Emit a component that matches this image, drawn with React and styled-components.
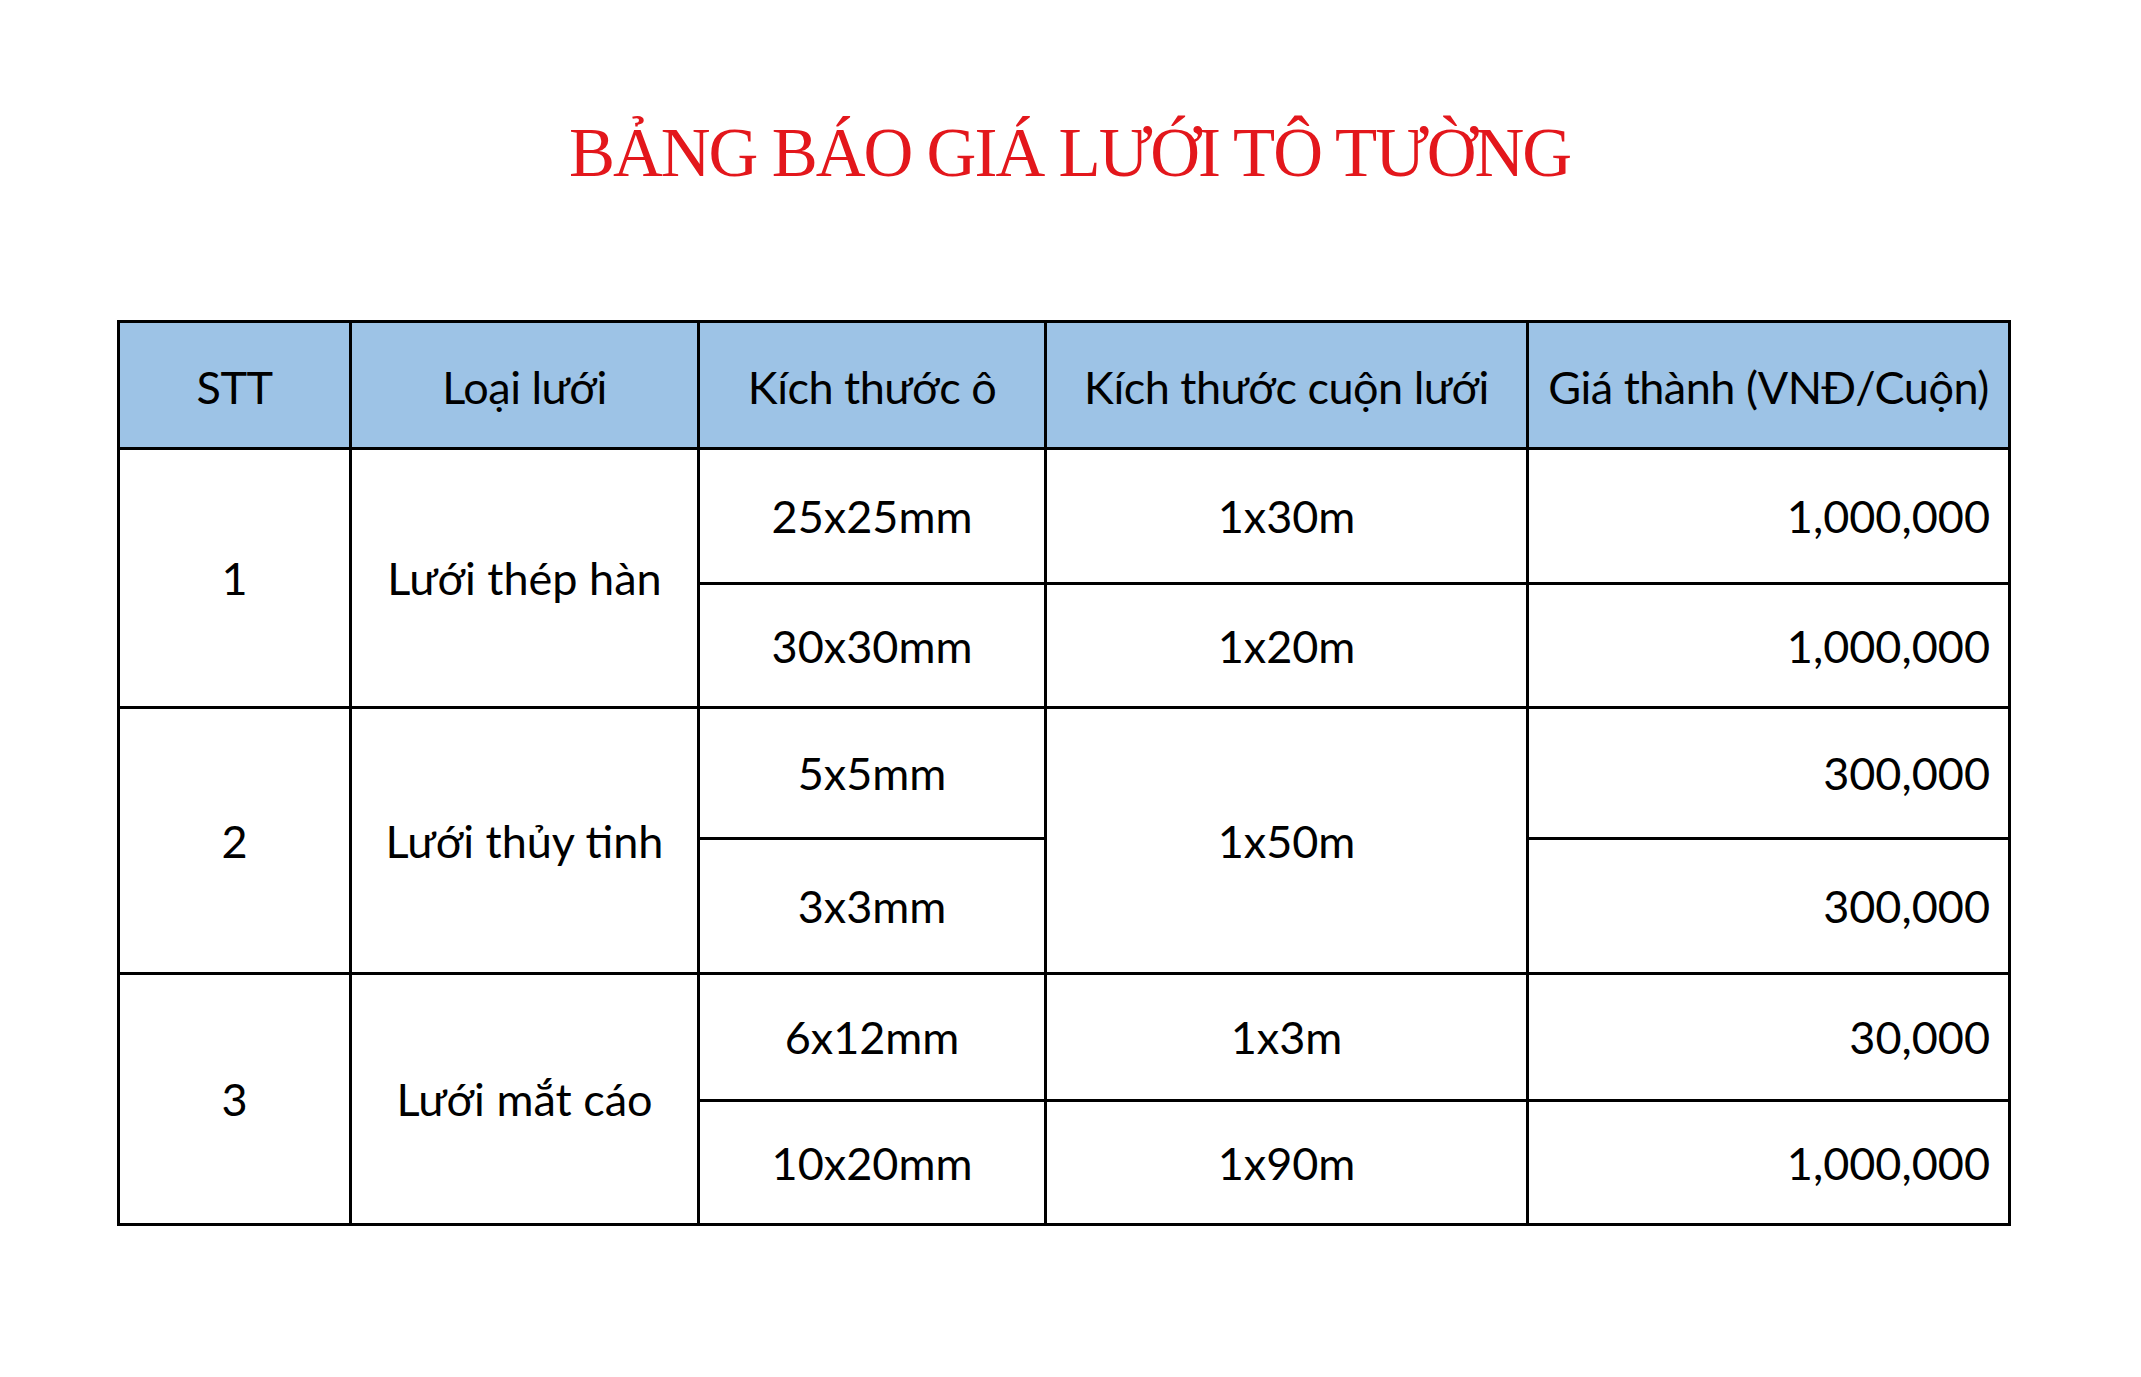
import React from "react";
import styled, { createGlobalStyle } from "styled-components";

const GlobalStyle = createGlobalStyle`
  html, body {
    margin: 0;
    padding: 0;
    background: #fff;
  }
`;

const rows = [
  {
    stt: "1",
    type: "Lưới thép hàn",
    items: [
      { mesh: "25x25mm", roll: "1x30m", price: "1,000,000", h: 135 },
      { mesh: "30x30mm", roll: "1x20m", price: "1,000,000", h: 124 },
    ],
  },
  {
    stt: "2",
    type: "Lưới thủy tinh",
    merged: "1x50m",
    items: [
      { mesh: "5x5mm", price: "300,000", h: 131 },
      { mesh: "3x3mm", price: "300,000", h: 135 },
    ],
  },
  {
    stt: "3",
    type: "Lưới mắt cáo",
    items: [
      { mesh: "6x12mm", roll: "1x3m", price: "30,000", h: 127 },
      { mesh: "10x20mm", roll: "1x90m", price: "1,000,000", h: 124 },
    ],
  },
];

const App = () => {
  return (
    <Page>
      <GlobalStyle />
      <Title>BẢNG BÁO GIÁ LƯỚI TÔ TƯỜNG</Title>
      <PriceTable>
        <colgroup>
          <col style={{ width: 232 }} />
          <col style={{ width: 348 }} />
          <col style={{ width: 347 }} />
          <col style={{ width: 482 }} />
          <col style={{ width: 482 }} />
        </colgroup>
        <thead>
          <HeadRow>
            <HeadCell>STT</HeadCell>
            <HeadCell>Loại lưới</HeadCell>
            <HeadCell>Kích thước ô</HeadCell>
            <HeadCell>Kích thước cuộn lưới</HeadCell>
            <HeadCell>Giá thành (VNĐ/Cuộn)</HeadCell>
          </HeadRow>
        </thead>
        <tbody>
          {rows.map((group) =>
            group.items.map((item, i) => (
              <BodyRow key={group.stt + i} $h={item.h}>
                {i === 0 && <Cell rowSpan={2}>{group.stt}</Cell>}
                {i === 0 && <Cell rowSpan={2}>{group.type}</Cell>}
                <Cell>{item.mesh}</Cell>
                {group.merged ? (
                  i === 0 && <Cell rowSpan={2}>{group.merged}</Cell>
                ) : (
                  <Cell>{item.roll}</Cell>
                )}
                <Cell $right>{item.price}</Cell>
              </BodyRow>
            ))
          )}
        </tbody>
      </PriceTable>
    </Page>
  );
};

const Page = styled.div`
  width: 2141px;
  min-height: 1377px;
  padding-top: 108px;
  box-sizing: border-box;
`;

const Title = styled.h1`
  margin: 0;
  text-align: center;
  font-family: "Liberation Serif", "Times New Roman", serif;
  font-weight: normal;
  font-size: 70px;
  line-height: 90px;
  letter-spacing: -2px;
  color: #e3171c;
  padding-right: 2px;
  transform: scaleX(0.985);
`;

const PriceTable = styled.table`
  margin: 122px 0 0 117px;
  width: 1891px;
  border-collapse: collapse;
  table-layout: fixed;
  font-family: Lato, Carlito, "Liberation Sans", sans-serif;
  font-size: 45px;
  color: #000;
`;

const HeadRow = styled.tr`
  height: 127px;
  background: #9dc3e6;
`;

const HeadCell = styled.th`
  border: 3px solid #000;
  font-weight: normal;
  text-align: center;
  padding: 4px 0 0;
  white-space: nowrap;
  letter-spacing: -0.5px;
`;

const BodyRow = styled.tr`
  height: ${(p) => p.$h}px;
`;

const Cell = styled.td`
  border: 3px solid #000;
  text-align: ${(p) => (p.$right ? "right" : "center")};
  padding: ${(p) => (p.$right ? "0 18px 0 0" : "0")};
  vertical-align: middle;
  white-space: nowrap;
`;

export default App;
